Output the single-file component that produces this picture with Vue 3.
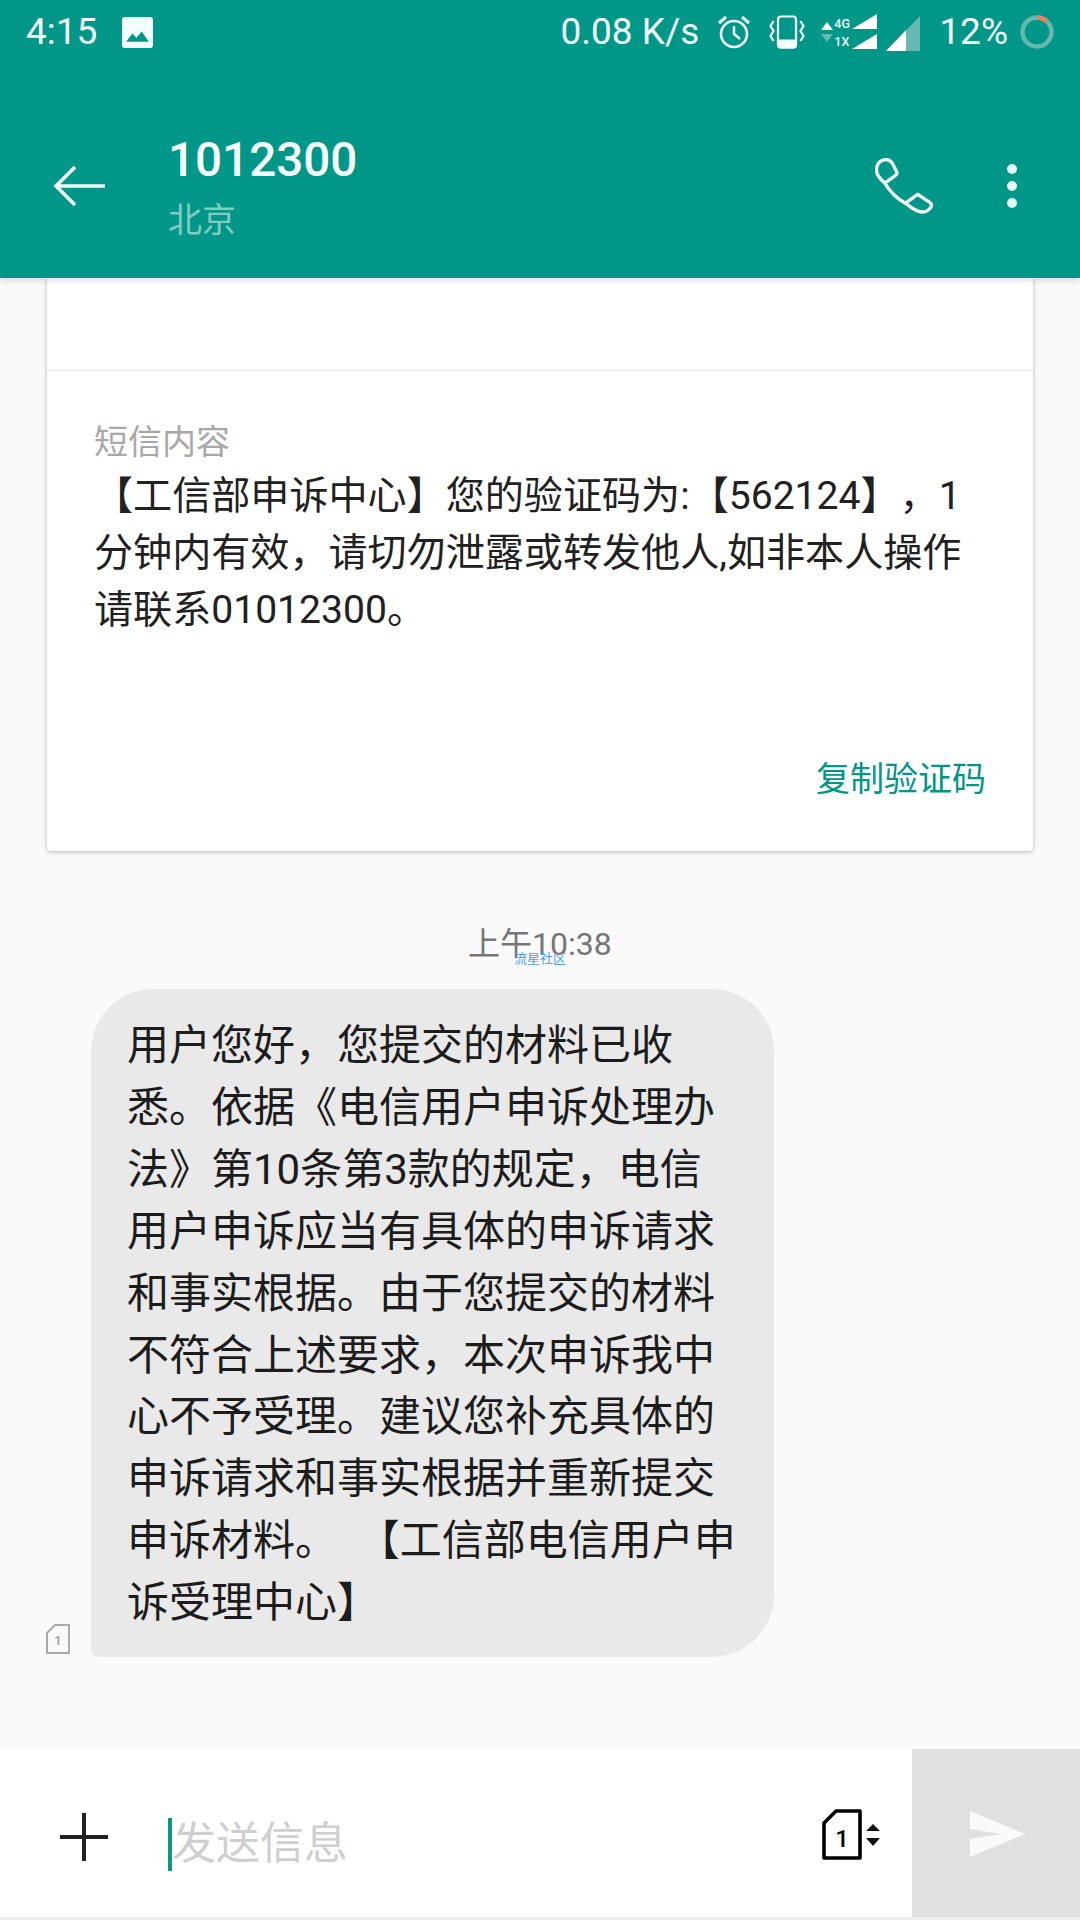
<template>
  <div class="phone">
    <header class="appbar">
      <div class="status">
        <div class="status-left">
          <span class="clock">4:15</span>
          <svg class="pic" viewBox="0 0 30 30">
            <rect x="0" y="0" width="30" height="30" rx="3" fill="#f2fffc" />
            <path d="M4 24 L10 16 L14 20 L19 14 L26 24 Z" fill="#009688" />
          </svg>
        </div>
        <div class="status-right">
          <span class="speed">0.08 K/s</span>
          <svg class="alarm" viewBox="0 0 34 34" fill="none" stroke="#f2fffc">
            <circle cx="17" cy="19" r="13" stroke-width="2.6" />
            <path d="M17 11 V19 L23 24" stroke-width="2.4" />
            <path d="M2 8 L9 2 M32 8 L25 2" stroke-width="3" />
          </svg>
          <svg class="vibrate" viewBox="0 0 36 34" fill="none" stroke="#f2fffc" stroke-width="2.2">
            <rect x="9" y="1.5" width="18" height="31" rx="3" />
            <path d="M9 25.5 H27 V30 A3 3 0 0 1 24 32.5 H12 A3 3 0 0 1 9 30 Z" fill="#f2fffc" />
            <path d="M4.5 6 L1.5 11 L4.5 16 L1.5 21 L4.5 26" />
            <path d="M31.5 6 L34.5 11 L31.5 16 L34.5 21 L31.5 26" />
          </svg>
          <div class="net">
            <svg class="net-arrows" viewBox="0 0 12 22">
              <path d="M6 1 L12 9 H0 Z" fill="#f2fffc" />
              <path d="M6 21 L0 13 H12 Z" fill="#66b8b0" />
            </svg>
            <div class="net-labels">
              <span>4G</span>
              <span>1X</span>
            </div>
            <svg class="net-bars" viewBox="0 0 25 36">
              <path d="M0 15 L25 0 V15 Z M0 35 L25 20 V35 Z" fill="#fff" />
            </svg>
          </div>
          <svg class="signal" viewBox="0 0 34 35">
            <path d="M0 35 L34 0 V35 Z" fill="#66b8b0" />
            <path d="M0 35 L20 14 V35 Z" fill="#fff" />
          </svg>
          <span class="battery-text">12%</span>
          <svg class="battery" viewBox="0 0 34 34" fill="none" stroke-width="4.5">
            <circle cx="17" cy="17" r="14.5" stroke="#66b8b0" />
            <path d="M17 2.5 A14.5 14.5 0 0 1 27 6.5" stroke="#f0805c" />
          </svg>
        </div>
      </div>
      <div class="toolbar">
        <svg class="back" viewBox="0 0 52 42" fill="none" stroke="#f2fffc" stroke-width="3.6">
          <path d="M52 21 H3 M22 2 L3 21 L22 40" />
        </svg>
        <div class="contact">
          <div class="number">1012300</div>
          <div class="place">北京</div>
        </div>
        <svg class="call" viewBox="0 0 59 57" fill="none" stroke="#f2fffc" stroke-width="3.4" stroke-linejoin="round">
          <path d="M9 2 C13 1 16 3 17.5 5 L22 14 C23 16 22 17 20.5 18 L10 25.5 C5 21 1 17 1.5 11 C2 6 5 3 9 2 Z" />
          <path d="M10 25.5 C15 34 22 41 31 46" />
          <path d="M31 46 L42 38 C43 37 44 37 45 38 L56 45.5 C58 47 58 48 57 50 C55 53 52 55 48 55 C42 55 36 50 31 46 Z" />
        </svg>
        <div class="more">
          <i></i>
          <i></i>
          <i></i>
        </div>
      </div>
    </header>

    <main class="thread">
      <section class="card">
        <div class="card-top"></div>
        <div class="card-body">
          <div class="label">短信内容</div>
          <p v-for="line in smsLines" :key="line" class="sms-line">{{ line }}</p>
        </div>
        <div class="card-action">复制验证码</div>
      </section>

      <div class="time">
        上午10:38
        <span class="watermark">流星社区</span>
      </div>

      <div class="message">
        <svg class="sim-small" viewBox="0 0 24 30" fill="none" stroke="#aaa" stroke-width="2">
          <path d="M9 1 H23 V29 H1 V9 Z" />
          <text x="12" y="21" font-size="13" font-weight="500" fill="#999" stroke="none" text-anchor="middle" font-family="Roboto">1</text>
        </svg>
        <div class="bubble">
          <div v-for="line in bubbleLines" :key="line" class="bubble-line">{{ line }}</div>
        </div>
      </div>
    </main>

    <footer class="composer">
      <svg class="plus" viewBox="0 0 48 48" stroke="#212121" stroke-width="4">
        <path d="M24 0 V48 M0 24 H48" />
      </svg>
      <div class="input">
        <span class="caret"></span>
        <span class="placeholder">发送信息</span>
      </div>
      <div class="sim-pick">
        <div class="sim-big">
          <svg viewBox="0 0 40 51" fill="none" stroke="#000" stroke-width="3.6" stroke-linejoin="round">
            <path d="M14 2 H38 V49 H2 V14 Z" />
            <text x="20" y="38" font-size="24" fill="#000" stroke="none" text-anchor="middle" font-family="Roboto" font-weight="500">1</text>
          </svg>
        </div>
        <svg class="sim-arrows" viewBox="0 0 14 22">
          <path d="M7 0 L14 7 H0 Z M7 22 L0 14 H14 Z" fill="#111" />
        </svg>
      </div>
      <div class="send">
        <svg viewBox="0 0 56 46">
          <path d="M1 0 L56 23 L1 46 V28 L32 23 L1 18 Z" fill="#fafafa" />
        </svg>
      </div>
    </footer>
  </div>
</template>

<script setup>
const smsLines = [
  '【工信部申诉中心】您的验证码为:【562124】，1',
  '分钟内有效，请切勿泄露或转发他人,如非本人操作',
  '请联系01012300。'
]

const bubbleLines = [
  '用户您好，您提交的材料已收',
  '悉。依据《电信用户申诉处理办',
  '法》第10条第3款的规定，电信',
  '用户申诉应当有具体的申诉请求',
  '和事实根据。由于您提交的材料',
  '不符合上述要求，本次申诉我中',
  '心不予受理。建议您补充具体的',
  '申诉请求和事实根据并重新提交',
  '申诉材料。  【工信部电信用户申',
  '诉受理中心】'
]
</script>

<style>
html,
body {
  margin: 0;
  background: #fafafa;
}
</style>

<style scoped>
.phone {
  width: 1080px;
  height: 1920px;
  display: flex;
  flex-direction: column;
  overflow: hidden;
  background: #fafafa;
  font-family: Roboto, "Noto Sans CJK SC", sans-serif;
  color: #212121;
  text-spacing-trim: space-all;
}

.appbar {
  height: 278px;
  flex: none;
  display: flex;
  flex-direction: column;
  background: #009688;
  color: #f2fffc;
  position: relative;
  z-index: 2;
  box-shadow: 0 2px 6px rgba(0, 0, 0, 0.15);
}

.status {
  height: 64px;
  display: flex;
  justify-content: space-between;
  align-items: center;
  padding: 0 26px;
}

.status-left,
.status-right {
  display: flex;
  align-items: center;
}

.clock,
.speed,
.battery-text {
  font-size: 37px;
  line-height: 64px;
}

.pic {
  width: 31px;
  height: 31px;
  margin-left: 25px;
}

.alarm {
  width: 34px;
  height: 34px;
  margin-left: 18px;
}

.vibrate {
  width: 36px;
  height: 34px;
  margin-left: 18px;
}

.net {
  display: flex;
  align-items: center;
  margin-left: 16px;
}

.net-arrows {
  width: 12px;
  height: 22px;
  margin-right: 1px;
}

.net-labels {
  display: flex;
  flex-direction: column;
  gap: 3px;
  font-size: 12.5px;
  line-height: 15px;
  font-weight: 500;
  width: 18px;
}

.net-bars {
  width: 25px;
  height: 36px;
}

.signal {
  width: 34px;
  height: 35px;
  margin: 2px 0 0 9px;
}

.battery-text {
  margin-left: 19px;
}

.battery {
  width: 34px;
  height: 34px;
  margin-left: 12px;
}

.toolbar {
  flex: 1;
  display: flex;
  align-items: center;
  padding-left: 53px;
}

.back {
  width: 52px;
  height: 42px;
  flex: none;
  margin-top: 30px;
}

.contact {
  margin: 32px 0 0 63px;
  flex: 1;
}

.number {
  font-size: 47.6px;
  font-weight: 500;
  line-height: 56px;
  color: #f6fffd;
}

.place {
  font-size: 34px;
  line-height: 44px;
  margin-top: 10px;
  color: #80cbc4;
}

.call {
  width: 58px;
  height: 56px;
  flex: none;
  margin: 30px -5px 0 3px;
}

.more {
  display: flex;
  flex-direction: column;
  gap: 7px;
  width: 10px;
  margin: 30px 63px 0 79px;
}

.more i {
  display: block;
  width: 10px;
  height: 10px;
  border-radius: 50%;
  background: #e6faf7;
}

.thread {
  flex: 1;
  min-height: 0;
}

.card {
  width: 986px;
  margin-left: 47px;
  background: #fff;
  border-radius: 0 0 4px 4px;
  box-shadow: 0 1px 4px rgba(0, 0, 0, 0.28);
}

.card-top {
  height: 91px;
  border-bottom: 2px solid #eeeeee;
}

.card-body {
  padding: 48px 46px 0 47px;
}

.label {
  font-size: 34px;
  line-height: 46px;
  color: #a8a8a8;
}

.sms-line {
  margin: 0;
  font-size: 39.1px;
  line-height: 57px;
  white-space: pre;
  position: relative;
  top: 3px;
}

.card-action {
  margin-top: 120px;
  padding: 0 47px 49px 0;
  text-align: right;
  font-size: 34px;
  line-height: 46px;
  color: #009688;
}

.time {
  position: relative;
  width: 142px;
  margin: 71px 0 0 468px;
  font-size: 32px;
  line-height: 44px;
  white-space: nowrap;
  color: #757575;
}

.watermark {
  position: absolute;
  left: 46px;
  top: 29px;
  font-size: 13px;
  line-height: 16px;
  color: #4aa3f0;
}

.message {
  display: flex;
  align-items: flex-end;
  margin-top: 23px;
  padding-left: 46px;
}

.sim-small {
  width: 24px;
  height: 30px;
  flex: none;
  margin: 0 21px 3px 0;
}

.bubble {
  width: 683px;
  box-sizing: border-box;
  padding: 26px 0 23px 36px;
  background: #e9e9e9;
  border-radius: 62px 62px 62px 8px;
}

.bubble-line {
  font-size: 42px;
  line-height: 61.9px;
  white-space: pre;
  color: #1c1c1c;
}

.composer {
  height: 168px;
  flex: none;
  margin-bottom: 3px;
  display: flex;
  align-items: stretch;
  background: #fff;
  box-shadow: 0 3px 0 #eeeeee;
}

.plus {
  width: 48px;
  height: 48px;
  flex: none;
  margin: 64px 0 0 60px;
}

.input {
  flex: 1;
  display: flex;
  align-items: center;
  margin: 69px 0 47px 60px;
}

.caret {
  width: 4px;
  height: 53px;
  flex: none;
  background: #0f9680;
}

.placeholder {
  margin-left: 0;
  font-size: 44px;
  line-height: 55px;
  color: #cfcfcf;
}

.sim-pick {
  width: 90px;
  flex: none;
  display: flex;
  align-items: center;
  margin: 3px 0 0 -1px;
}

.sim-big {
  width: 40px;
  height: 51px;
  flex: none;
}

.sim-big svg {
  display: block;
  width: 40px;
  height: 51px;
}

.sim-arrows {
  width: 14px;
  height: 22px;
  margin: 0 0 0 4px;
}

.send {
  width: 168px;
  flex: none;
  display: flex;
  align-items: center;
  justify-content: center;
  background: #e0e0e0;
}

.send svg {
  width: 56px;
  height: 46px;
  margin: 2px 0 0 2px;
}
</style>
